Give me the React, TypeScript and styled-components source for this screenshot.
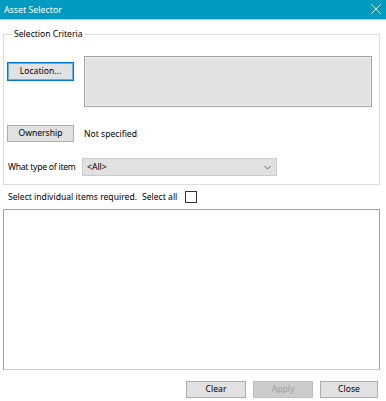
import styled, { createGlobalStyle } from 'styled-components';

const GlobalStyle = createGlobalStyle`
  html, body {
    margin: 0;
    padding: 0;
    background: #ffffff;
  }
  * {
    box-sizing: border-box;
  }
`;

const Window = styled.div`
  display: flex;
  flex-direction: column;
  width: 386px;
  height: 401px;
  background: #ffffff;
  font-family: 'Noto Sans', 'Liberation Sans', sans-serif;
  font-size: 8.6px;
  color: #000000;
  overflow: hidden;
`;

const TitleBar = styled.div`
  display: flex;
  align-items: center;
  justify-content: space-between;
  height: 20px;
  padding: 0 5px 0 4px;
  background: #009bbe;
  border-bottom: 1px solid #9fd8e8;
  color: #ffffff;
  font-size: 8.8px;
`;

const CloseIcon = styled.svg`
  width: 10px;
  height: 10px;
  margin-top: -1px;
`;

const Body = styled.div`
  display: flex;
  flex-direction: column;
  flex: 1;
  padding: 0 6px 0 3px;
`;

const GroupBox = styled.fieldset`
  margin: 8px 0 0 0;
  padding: 0 3px 8px 3px;
  border: 1px solid #dcdcdc;
  min-width: 0;
`;

const Legend = styled.legend`
  margin-left: 6px;
  padding: 0 1px;
  line-height: 12px;
  color: #000000;
`;

const CriteriaRow = styled.div<{ $top: number }>`
  display: flex;
  align-items: center;
  margin-top: ${({ $top }) => $top}px;
`;

const LocationRow = styled(CriteriaRow)`
  align-items: flex-start;
`;

const Button = styled.button<{ $focused?: boolean; $width: number }>`
  width: ${({ $width }) => $width}px;
  height: ${({ $focused }) => ($focused ? 19 : 17)}px;
  margin: 0;
  padding: 0 0 1px 0;
  flex-shrink: 0;
  font-family: inherit;
  font-size: 8.6px;
  color: #000000;
  background: #e1e1e1;
  border: 1px solid ${({ $focused }) => ($focused ? '#0078d7' : '#adadad')};
  box-shadow: ${({ $focused }) => ($focused ? 'inset 0 0 0 1px #5fb0ee' : 'none')};
  &:disabled {
    background: #cccccc;
    border-color: #bfbfbf;
    color: #a0a0a0;
  }
`;

const LocationButton = styled(Button)`
  margin-top: 6px;
`;

const LocationBox = styled.div`
  flex: 1;
  height: 51px;
  margin: 0 4px 0 10px;
  background: #e1e1e1;
  border: 1px solid #a0a0a0;
  box-shadow: inset 0 0 0 1px #f0f0f0;
`;

const ValueText = styled.span`
  margin-left: 10px;
`;

const FieldLabel = styled.span`
  width: 75px;
  padding-left: 1px;
  white-space: nowrap;
  letter-spacing: -0.25px;
`;

const Select = styled.div`
  display: flex;
  align-items: center;
  justify-content: space-between;
  width: 195px;
  height: 18px;
  padding: 0 5px 0 4px;
  background: #e1e1e1;
  border: 1px solid #cccccc;
`;

const Chevron = styled.svg`
  width: 7px;
  height: 5px;
`;

const SelectRow = styled.div`
  display: flex;
  align-items: center;
  height: 15px;
  margin-top: 4px;
  padding-left: 5px;
`;

const SelectAllLabel = styled.span`
  margin-left: 5px;
`;

const CheckBox = styled.span`
  width: 12px;
  height: 12px;
  margin-left: 8px;
  border: 1px solid #333333;
  background: #ffffff;
`;

const ItemList = styled.div`
  height: 161px;
  margin-top: 5px;
  border: 1px solid #a0a0a0;
  border-bottom-color: #c8c8c8;
  background: #ffffff;
`;

const Footer = styled.div`
  display: flex;
  justify-content: flex-end;
  gap: 7px;
  margin-top: 11px;
  padding-right: 2px;
`;

const App = () => {
  return (
    <>
      <GlobalStyle />
      <Window>
        <TitleBar>
          <span>Asset Selector</span>
          <CloseIcon viewBox="0 0 10 10">
            <path d="M0.5 0.5 L9.5 9.5 M9.5 0.5 L0.5 9.5" stroke="#ffffff" strokeWidth="1" fill="none" />
          </CloseIcon>
        </TitleBar>
        <Body>
          <GroupBox>
            <Legend>Selection Criteria</Legend>
            <LocationRow $top={16}>
              <LocationButton $focused $width={67}>
                Location...
              </LocationButton>
              <LocationBox />
            </LocationRow>
            <CriteriaRow $top={18}>
              <Button $width={67}>Ownership</Button>
              <ValueText>Not specified</ValueText>
            </CriteriaRow>
            <CriteriaRow $top={16}>
              <FieldLabel>What type of item</FieldLabel>
              <Select>
                <span>&lt;All&gt;</span>
                <Chevron viewBox="0 0 7 5">
                  <path d="M0.5 1 L3.5 4 L6.5 1" stroke="#555555" strokeWidth="0.9" fill="none" />
                </Chevron>
              </Select>
            </CriteriaRow>
          </GroupBox>
          <SelectRow>
            <span>Select individual items required.</span>
            <SelectAllLabel>Select all</SelectAllLabel>
            <CheckBox />
          </SelectRow>
          <ItemList />
          <Footer>
            <Button $width={60}>Clear</Button>
            <Button $width={60} disabled>
              Apply
            </Button>
            <Button $width={58}>Close</Button>
          </Footer>
        </Body>
      </Window>
    </>
  );
};

export default App;
